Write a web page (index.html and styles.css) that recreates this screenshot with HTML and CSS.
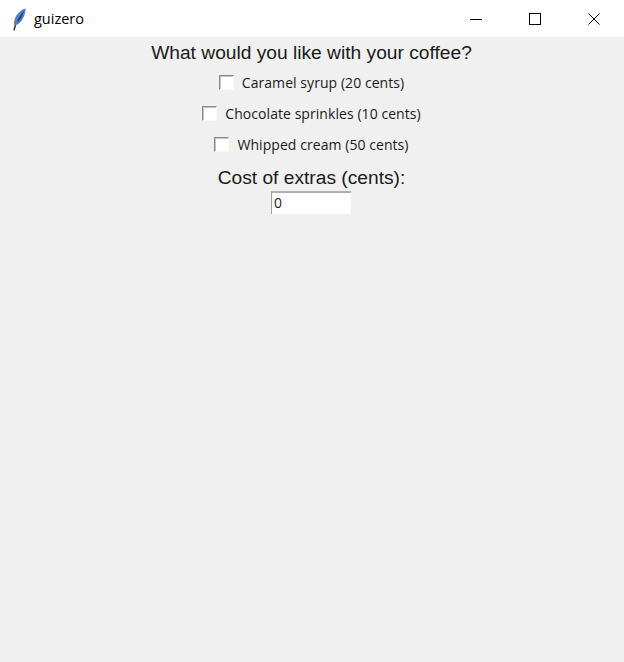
FILE: index.html
```html
<!DOCTYPE html>
<html lang="en">
<head>
    <meta charset="UTF-8">
    <title>guizero</title>
    <link rel="stylesheet" href="styles.css">
</head>
<body>
    <header class="titlebar">
        <div class="title">
            <svg class="feather" width="16" height="24" viewBox="0 0 16 24">
                <path d="M14.500 1.500 C10 2.500 6 7 4.500 11 C3.500 14 3.500 16.500 4 18.500 C7.500 17.500 11 14.500 12.700 10 C14 7 14.700 4 14.500 1.500 Z" fill="#4a80cc"/>
                <path d="M13 4 C10 7 7.500 11 6 15.500 C8.500 14 11 9.500 13 4 Z" fill="#1f3560"/>
                <path d="M6.500 6.500 C4.300 9.500 3 13.500 3 17.500 L4.500 18 C4.300 14 5 10 6.500 6.500 Z" fill="#6f7885"/>
                <path d="M4.500 18 C3.800 20 3.300 21.500 3 23.500" fill="none" stroke="#333" stroke-width="1.500"/>
            </svg>
            <span class="title-text">guizero</span>
        </div>
        <div class="window-buttons">
            <div class="window-btn">
                <svg width="12" height="12" viewBox="0 0 12 12"><path d="M0 6.500H12" stroke="#000" fill="none"/></svg>
            </div>
            <div class="window-btn">
                <svg width="12" height="12" viewBox="0 0 12 12"><rect x="0.500" y="0.500" width="11" height="11" stroke="#000" fill="none"/></svg>
            </div>
            <div class="window-btn">
                <svg width="12" height="12" viewBox="0 0 12 12"><path d="M0.500 0.500L11.500 11.500M11.500 0.500L0.500 11.500" stroke="#000" fill="none"/></svg>
            </div>
        </div>
    </header>

    <main class="app">
        <div class="heading">What would you like with your coffee?</div>
        <label class="check-row"><span class="box"></span><span class="check-label">Caramel syrup (20 cents)</span></label>
        <label class="check-row"><span class="box"></span><span class="check-label">Chocolate sprinkles (10 cents)</span></label>
        <label class="check-row"><span class="box"></span><span class="check-label">Whipped cream (50 cents)</span></label>
        <div class="heading cost">Cost of extras (cents):</div>
        <div class="textbox">0</div>
    </main>
</body>
</html>
```

FILE: styles.css
```css
* {
    margin: 0;
    padding: 0;
    box-sizing: border-box;
}

body {
    width: 624px;
    height: 662px;
    overflow: hidden;
    background-color: #f0f0f0;
    color: #1a1a1a;
    font-family: "Liberation Sans", Arial, sans-serif;
}

/* Title bar */
.titlebar {
    height: 37px;
    background-color: #ffffff;
    display: flex;
    justify-content: space-between;
    align-items: center;
}

.title {
    display: flex;
    align-items: center;
    padding-left: 11px;
}

.feather {
    display: block;
}

.title-text {
    margin-left: 7px;
    font-family: "Open Sans", sans-serif;
    font-size: 14.500px;
    color: #000000;
}

.window-buttons {
    display: flex;
    padding-right: 1px;
}

.window-btn {
    width: 59px;
    height: 37px;
    display: flex;
    align-items: center;
    justify-content: center;
}

/* App content */
.app {
    display: flex;
    flex-direction: column;
    align-items: center;
    padding-right: 1px;
}

.heading {
    font-size: 19.200px;
    line-height: 23px;
    margin-top: 4px;
    margin-bottom: 3px;
}

.cost {
    margin-top: 6px;
    margin-bottom: 2px;
}

.check-row {
    display: flex;
    align-items: center;
    height: 31px;
}

.box {
    width: 15px;
    height: 15px;
    background-color: #ffffff;
    border: 1px solid #8a8a8a;
    border-right-color: #f8f8f8;
    border-bottom-color: #f8f8f8;
    box-shadow: inset 1px 1px 0 #c4c4c4;
    margin-right: 8px;
}

.check-label {
    font-family: "Open Sans", sans-serif;
    font-size: 14px;
    letter-spacing: 0.06px;
}

.textbox {
    width: 80px;
    height: 23px;
    margin-right: 1px;
    background-color: #ffffff;
    border-top: 2px solid #b0b0b0;
    border-left: 1px solid #a0a0a0;
    padding-left: 2px;
    font-family: "Open Sans", sans-serif;
    font-size: 14px;
    line-height: 19px;
}
```
